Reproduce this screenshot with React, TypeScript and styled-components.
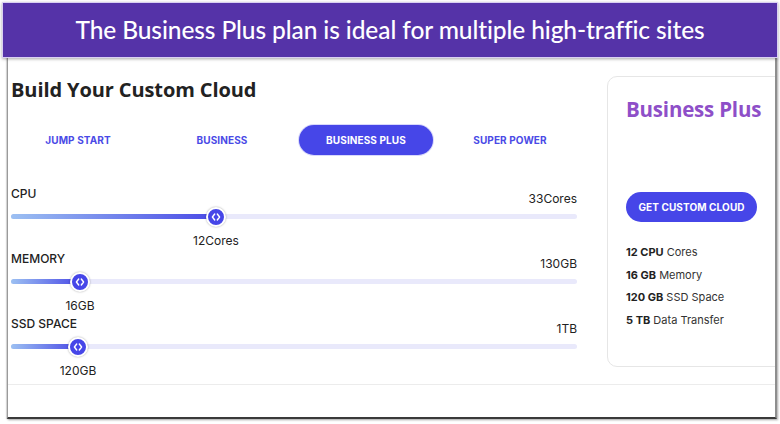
import React from "react";
import styled, { createGlobalStyle } from "styled-components";

const Global = createGlobalStyle`
  html, body { margin: 0; padding: 0; background: #ffffff; }
  body { width: 780px; height: 424px; overflow: hidden; font-family: Inter, "Liberation Sans", sans-serif; }
  * { box-sizing: border-box; }
`;

const Page = styled.div`
  position: relative;
  width: 780px;
  height: 424px;
  display: flex;
  flex-direction: column;
`;

const Banner = styled.div`
  position: relative;
  z-index: 2;
  margin: 2px 2px 0 2px;
  height: 56px;
  background: #5533a8;
  border: 1px solid #d9d0f2;
  box-shadow: 0 1px 3px rgba(0, 0, 0, 0.35);
  display: flex;
  align-items: center;
  justify-content: center;
  color: #ffffff;
  font-family: Lato, "Open Sans", sans-serif;
  font-weight: 500;
  font-size: 24.5px;
  letter-spacing: -0.1px;
  padding-bottom: 2px;
  flex-shrink: 0;
`;

const Frame = styled.div`
  margin: -1px 3px 0 7px;
  height: 362px;
  flex-shrink: 0;
  background: #ffffff;
  border-left: 1px solid #9a9a9a;
  border-right: 2px solid #8e8e8e;
  border-bottom: 2px solid #3a3a3a;
  box-shadow: 1px 1px 2px rgba(0, 0, 0, 0.35), -1px 0 1px rgba(0, 0, 0, 0.15);
  overflow: hidden;
  display: flex;
  flex-direction: column;
`;

const Body = styled.div`
  display: flex;
  height: 328px;
  flex-shrink: 0;
  border-bottom: 1px solid #ececec;
`;

const Left = styled.div`
  width: 572px;
  padding: 19px 0 0 3px;
  display: flex;
  flex-direction: column;
  & > * { flex-shrink: 0; }
`;

const Heading = styled.h1`
  margin: 0;
  font-family: "Open Sans", Lato, sans-serif;
  font-weight: 700;
  font-size: 20px;
  line-height: 28px;
  color: #222222;
  letter-spacing: -0.1px;
`;

const Tabs = styled.div`
  display: grid;
  grid-template-columns: repeat(4, 144px);
  margin: 21px 0 0 -5px;
  height: 30px;
`;

const Tab = styled.div<{ $active?: boolean }>`
  margin: 0 5px;
  display: flex;
  align-items: center;
  justify-content: center;
  border-radius: 15px;
  font-family: Inter, "Liberation Sans", sans-serif;
  font-weight: 700;
  font-size: 10px;
  letter-spacing: 0.1px;
  color: ${(p) => (p.$active ? "#ffffff" : "#4a4ae6")};
  background: ${(p) => (p.$active ? "#4646e8" : "transparent")};
  box-shadow: ${(p) => (p.$active ? "0 0 0 1px #d8d8fb" : "none")};
`;

const Sliders = styled.div`
  margin-top: 37px;
  display: flex;
  flex-direction: column;
`;

const SliderBlock = styled.div`
  height: 65px;
  flex-shrink: 0;
  display: flex;
  flex-direction: column;
`;

const SliderHead = styled.div`
  display: flex;
  justify-content: space-between;
  align-items: flex-start;
  height: 19px;
  width: 566px;
`;

const Label = styled.span`
  font-size: 12px;
  font-weight: 500;
  color: #222222;
  line-height: 14px;
  margin-top: -5px;
`;

const MaxValue = styled.span`
  font-size: 12px;
  font-weight: 400;
  color: #222222;
  line-height: 14px;
  margin-top: 0px;
`;

const Track = styled.div`
  position: relative;
  width: 566px;
  height: 5px;
  margin-top: 3px;
  border-radius: 3px;
  background: #e9e9fb;
`;

const Fill = styled.div`
  position: absolute;
  left: 0;
  top: 0;
  height: 5px;
  border-radius: 3px;
  background: linear-gradient(90deg, #9cc0f2 0%, #4a4ae6 100%);
`;

const Thumb = styled.div`
  position: absolute;
  top: 50%;
  width: 20px;
  height: 20px;
  margin-left: -10px;
  margin-top: -10px;
  border-radius: 50%;
  background: #4646e8;
  border: 2px solid #ffffff;
  box-shadow: 0 0 2px rgba(0, 0, 0, 0.35);
  display: flex;
  align-items: center;
  justify-content: center;
`;

const ValueRow = styled.div`
  position: relative;
  height: 20px;
  width: 566px;
`;

const Value = styled.span`
  position: absolute;
  top: 15px;
  transform: translateX(-50%);
  font-size: 12px;
  color: #222222;
  line-height: 14px;
  white-space: nowrap;
`;

const Card = styled.div`
  margin: 19px 0 0 27px;
  width: 190px;
  height: 291px;
  border: 1px solid #e6e6e6;
  border-radius: 10px;
  padding: 19px 0 0 18px;
  display: flex;
  flex-direction: column;
  flex-shrink: 0;
`;

const PlanName = styled.div`
  font-family: "Open Sans", Lato, sans-serif;
  font-weight: 700;
  font-size: 20.5px;
  color: #8e4fc8;
  line-height: 26px;
  letter-spacing: -0.2px;
`;

const CtaButton = styled.div`
  margin-top: 70px;
  width: 131px;
  height: 30px;
  border-radius: 15px;
  background: #4646e8;
  color: #ffffff;
  font-family: Inter, "Liberation Sans", sans-serif;
  font-weight: 700;
  font-size: 10px;
  display: flex;
  align-items: center;
  justify-content: center;
  letter-spacing: 0.1px;
`;

const Specs = styled.ul`
  list-style: none;
  margin: 23px 0 0 0;
  padding: 0;
  display: flex;
  flex-direction: column;
  gap: 8px;
`;

const Spec = styled.li`
  font-size: 11px;
  line-height: 14.5px;
  color: #333333;
  b { font-weight: 700; color: #222222; }
`;

const Chevrons = () => (
  <svg width="10" height="10" viewBox="0 0 10 10" fill="none" stroke="#ffffff" strokeWidth="1.4" strokeLinecap="round" strokeLinejoin="round">
    <path d="M3.7 2 L1.4 5 L3.7 8" />
    <path d="M6.3 2 L8.6 5 L6.3 8" />
  </svg>
);

const sliders = [
  { label: "CPU", max: "33Cores", value: "12Cores", pos: 205 },
  { label: "MEMORY", max: "130GB", value: "16GB", pos: 69 },
  { label: "SSD SPACE", max: "1TB", value: "120GB", pos: 67 },
];

const tabs = ["JUMP START", "BUSINESS", "BUSINESS PLUS", "SUPER POWER"];

export default function App() {
  return (
    <Page>
      <Global />
      <Banner>The Business Plus plan is ideal for multiple high-traffic sites</Banner>
      <Frame>
        <Body>
          <Left>
            <Heading>Build Your Custom Cloud</Heading>
            <Tabs>
              {tabs.map((t) => (
                <Tab key={t} $active={t === "BUSINESS PLUS"}>{t}</Tab>
              ))}
            </Tabs>
            <Sliders>
              {sliders.map((s) => (
                <SliderBlock key={s.label}>
                  <SliderHead>
                    <Label>{s.label}</Label>
                    <MaxValue>{s.max}</MaxValue>
                  </SliderHead>
                  <Track>
                    <Fill style={{ width: s.pos }} />
                    <Thumb style={{ left: s.pos }}>
                      <Chevrons />
                    </Thumb>
                  </Track>
                  <ValueRow>
                    <Value style={{ left: s.pos }}>{s.value}</Value>
                  </ValueRow>
                </SliderBlock>
              ))}
            </Sliders>
          </Left>
          <Card>
            <PlanName>Business Plus</PlanName>
            <CtaButton>GET CUSTOM CLOUD</CtaButton>
            <Specs>
              <Spec><b>12 CPU</b> Cores</Spec>
              <Spec><b>16 GB</b> Memory</Spec>
              <Spec><b>120 GB</b> SSD Space</Spec>
              <Spec><b>5 TB</b> Data Transfer</Spec>
            </Specs>
          </Card>
        </Body>
      </Frame>
    </Page>
  );
}
